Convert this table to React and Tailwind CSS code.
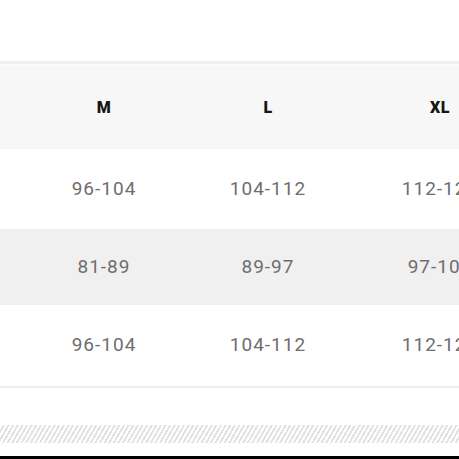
export default function App() {
  const rows = [
    { vals: ["96-104", "104-112", "112-120"], bg: "bg-white", h: "h-[80px]" },
    { vals: ["81-89", "89-97", "97-105"], bg: "bg-[#f0f0f0]", h: "h-[76px]" },
    { vals: ["96-104", "104-112", "112-120"], bg: "bg-white", h: "h-[81px]" },
  ];
  const widths = ["w-[164px]", "w-[164px]", "w-[180px]"];
  return (
    <div className="w-[459px] h-[459px] overflow-hidden bg-white flex flex-col" style={{ fontFamily: "Roboto, 'Noto Sans', sans-serif" }}>
      <div className="h-[61px] shrink-0 bg-white" />
      <div className="h-[3px] shrink-0 bg-[#efefef]" />
      <div className="h-[2px] shrink-0 bg-[#fcfcfc]" />
      <div className="h-[83px] shrink-0 bg-[#f7f7f7] flex items-center pl-[22px]">
        {["M", "L", "XL"].map((t, i) => (
          <div key={t} className={`${widths[i]} shrink-0 text-center text-[16px] font-black text-[#151515] tracking-[0.5px]`}>{t}</div>
        ))}
      </div>
      {rows.map((r, ri) => (
        <div key={ri} className={`${r.h} shrink-0 ${r.bg} flex items-center pl-[22px]`}>
          {r.vals.map((v, i) => (
            <div key={i} className={`${widths[i]} shrink-0 text-center text-[19px] font-normal text-[#6e6e6e] tracking-[1px]`}>{v}</div>
          ))}
        </div>
      ))}
      <div className="h-[2px] shrink-0 bg-[#ededed]" />
      <div className="h-[37px] shrink-0 bg-white" />
      <div className="h-[18px] shrink-0 bg-[repeating-linear-gradient(-60deg,#ffffff_0px,#ffffff_2px,#d9d9d9_2px,#d9d9d9_4px)] opacity-75" />
      <div className="h-[13px] shrink-0 bg-white" />
      <div className="h-[3px] shrink-0 bg-black" />
    </div>
  );
}
